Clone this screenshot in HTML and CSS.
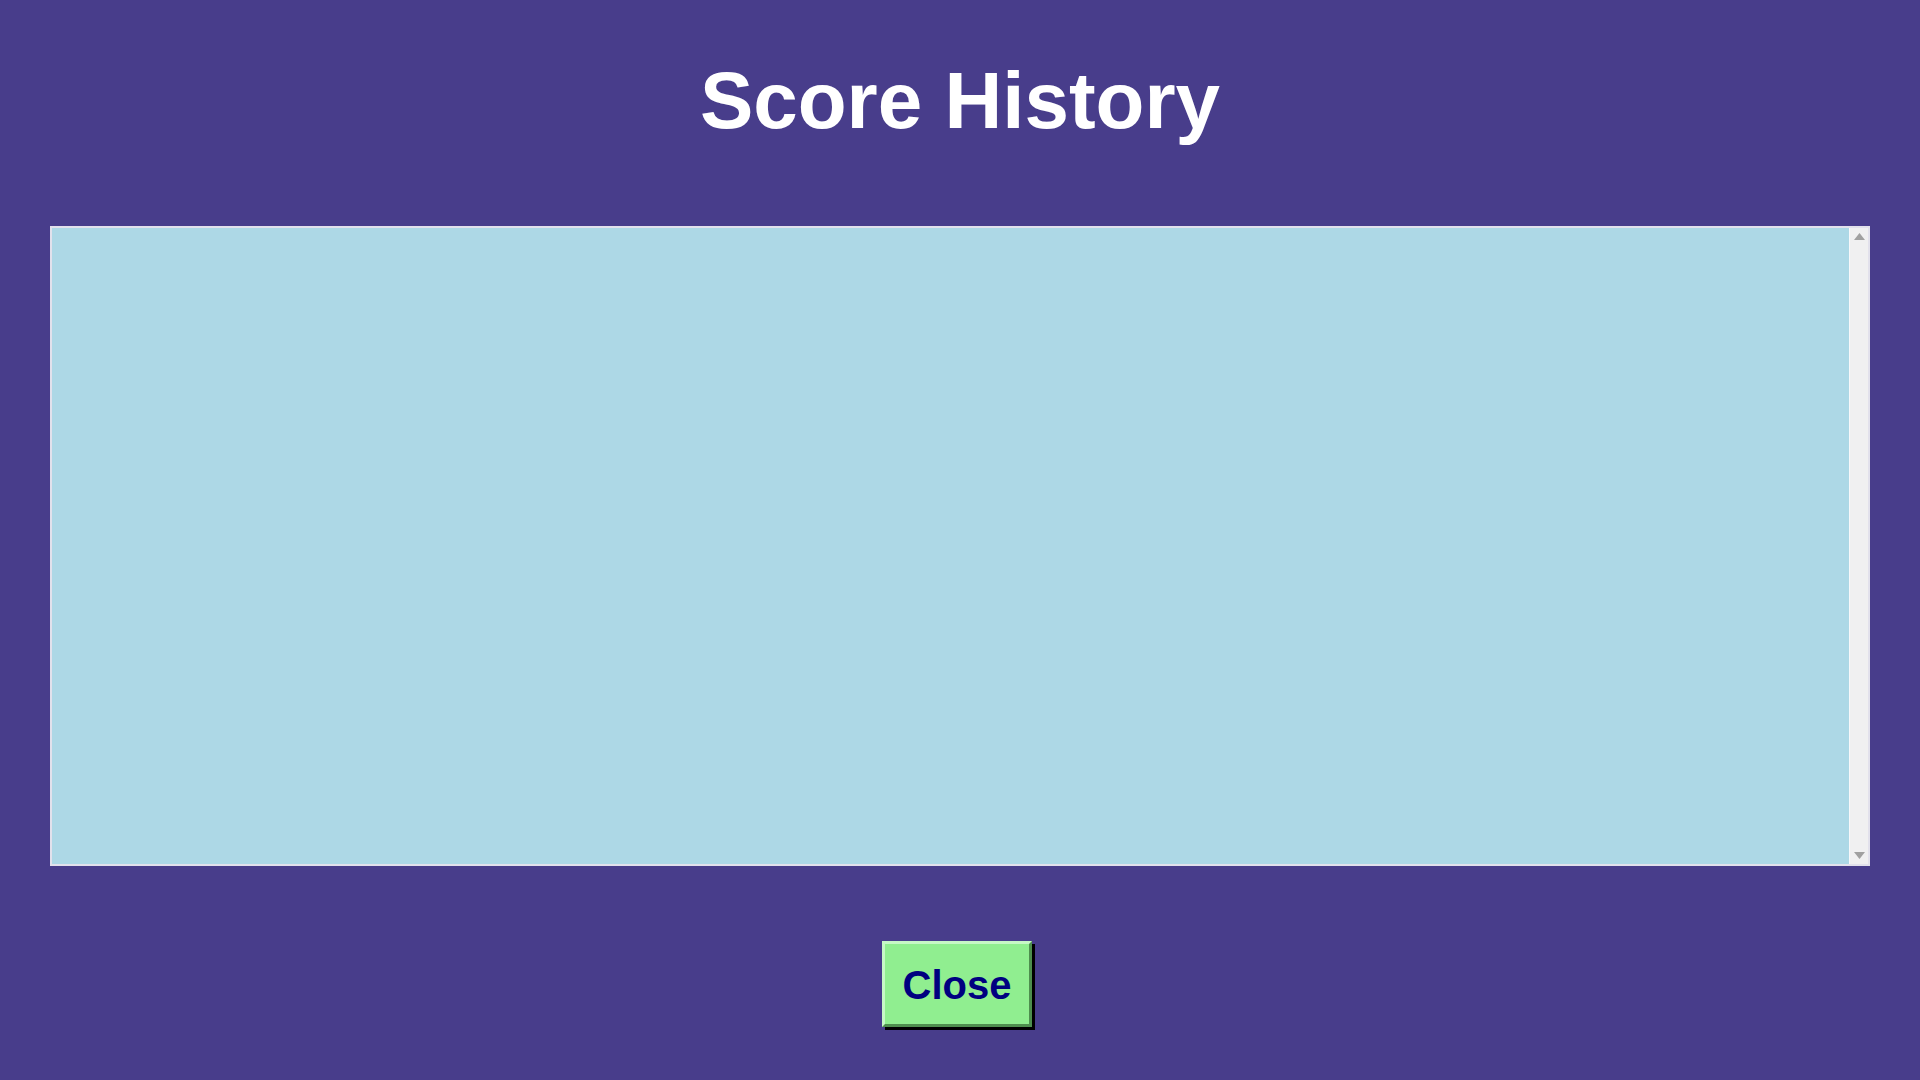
FILE: index.html
```html
<!DOCTYPE html>
<html lang="en">
<head>
<meta charset="utf-8">
<title>Score History</title>
<link rel="stylesheet" href="styles.css">
</head>
<body>
<main class="page">
  <h1 class="title">Score History</h1>
  <div class="history">
    <div class="history-content"></div>
    <div class="scrollbar">
      <svg class="arrow" width="11" height="7" viewBox="0 0 11 7"><polygon points="5.5,0 11,7 0,7" fill="#a0a0a0"/></svg>
      <svg class="arrow" width="11" height="7" viewBox="0 0 11 7"><polygon points="0,0 11,0 5.5,7" fill="#a0a0a0"/></svg>
    </div>
  </div>
  <div class="actions">
    <button class="close-btn" type="button">Close</button>
  </div>
</main>
</body>
</html>
```
FILE: styles.css
```css
html, body {
  margin: 0;
  padding: 0;
  background: #483d8b;
  height: 100%;
}
.page {
  padding: 0 50px;
  display: flex;
  flex-direction: column;
  font-family: "Liberation Sans", Arial, sans-serif;
}
.title {
  margin: 58px 0 0;
  height: 85px;
  line-height: 85px;
  font-size: 80px;
  font-weight: bold;
  color: #ffffff;
  text-align: center;
}
.history {
  margin-top: 83px;
  height: 640px;
  box-sizing: border-box;
  border: 2px solid #e2e1ec;
  display: flex;
  background: #add8e6;
}
.history-content {
  flex: 1;
  background: #add8e6;
}
.scrollbar {
  width: 18px;
  border-left: 1px solid #f8f8fa;
  background: #f0f0f1;
  display: flex;
  flex-direction: column;
  justify-content: space-between;
  align-items: center;
  padding: 5px 0 5px;
}
.arrow {
  display: block;
}
.actions {
  margin-top: 75px;
  display: flex;
  justify-content: center;
}
.close-btn {
  width: 150px;
  height: 86px;
  box-sizing: border-box;
  margin: 0 6px 0 0;
  padding: 2px 0 0;
  background: #90ee90;
  border: 3px solid;
  border-color: #c6f8c6 #4e8e4e #4e8e4e #c6f8c6;
  box-shadow: 3px 3px 0 #000000;
  font-family: "Liberation Sans", Arial, sans-serif;
  font-size: 40px;
  font-weight: bold;
  color: #000080;
  cursor: pointer;
}
```
